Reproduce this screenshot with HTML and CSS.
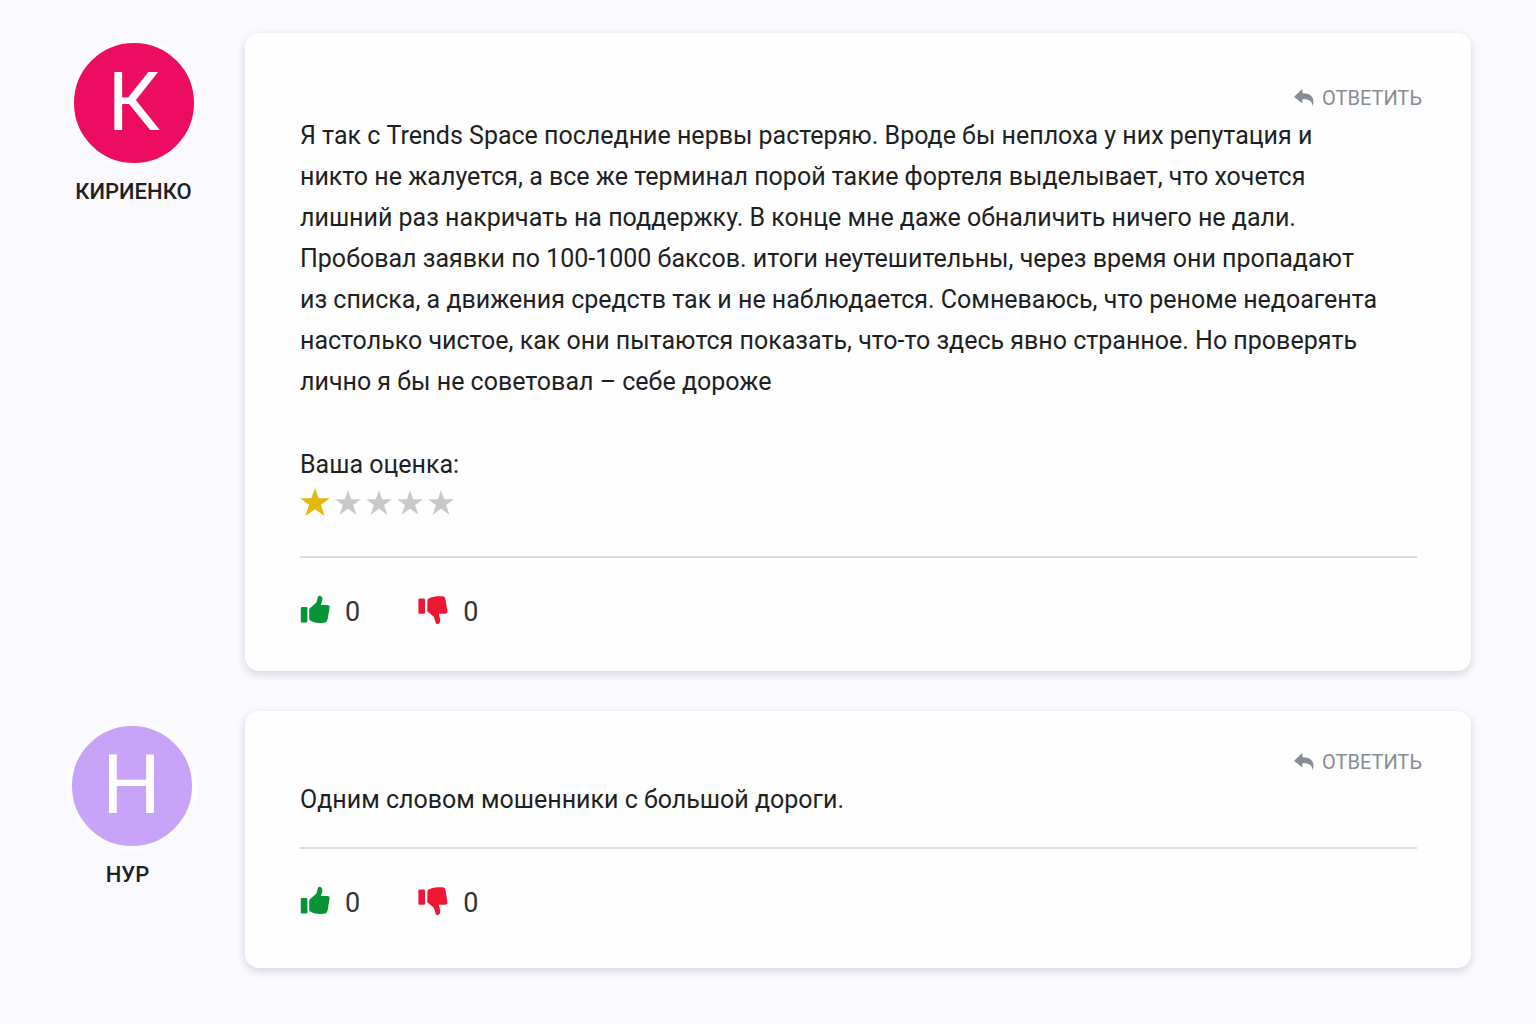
FILE: index.html
```html
<!DOCTYPE html>
<html lang="ru">
<head>
    <meta charset="UTF-8">
    <meta name="viewport" content="width=device-width, initial-scale=1.0">
    <title>Отзывы</title>
    <link rel="stylesheet" href="styles.css">
</head>
<body>
    <!-- Shared icons -->
    <svg class="icons" aria-hidden="true">
        <symbol id="reply" viewBox="0 0 20 18">
            <path d="M0.4 7.4 7.8 0.6Q8.4 0.2 8.4 1V4.2C16 4.3 19.6 7 19.4 13.2Q19.3 15.4 18.5 17.2C18.4 12 15 10.2 8.4 10.2V13.4Q8.4 14.4 7.6 13.8L0.4 8.2Q0 7.8 0.4 7.4Z"/>
        </symbol>
        <symbol id="star" viewBox="0 0 30 28">
            <path d="M15 0 18.6 10.3H30L20.9 16.8 24.6 28 15 21.2 5.4 28 9.1 16.8 0 10.3H11.4Z"/>
        </symbol>
        <symbol id="like" viewBox="0 0 30 30">
            <path d="M2 12H6.2Q7.4 12 7.4 13.2V26.2Q7.4 27.4 6.2 27.4H2Q0.8 27.4 0.8 26.2V13.2Q0.8 12 2 12Z"/>
            <path d="M9.6 13.6 16.4 7.4 18 1.8Q18.6 0.2 20.2 0.8C22.6 1.8 22.8 4 22 6.4L20.8 10H27.4Q30 10.2 29.6 12.8L27.6 24.4Q27.2 27 24.6 27.4C19.4 28.6 15 28 10.6 25.8Q9.2 25.2 9.2 23.8V14.8Q9.2 14 9.6 13.6Z"/>
        </symbol>
        <symbol id="dislike" viewBox="0 0 30 30">
            <path d="M1.4 3.4H6Q7 3.4 7 4.4V17.8Q7 18.8 6 18.8H1.4Q0.4 18.8 0.4 17.8V4.4Q0.4 3.4 1.4 3.4Z"/>
            <path d="M9.4 5.6C9.4 4 11 3.2 12.4 2.8 16.4 1.2 20.4 1 24.6 1.2Q27 1.4 27.4 3.8L29.4 16Q29.6 18.6 27 18.8H20.8L22 23.4C22.6 26 22 28 20 29Q18.4 29.6 17.8 28L15.8 21.8 9.8 16.8Q9.2 16.4 9.2 15.4Z"/>
        </symbol>
    </svg>

    <main class="comments">
        <article class="comment">
            <div class="author">
                <div class="avatar">К</div>
                <div class="name">КИРИЕНКО</div>
            </div>
            <div class="card card-rated">
                <button class="reply" type="button"><svg><use href="#reply"/></svg>ОТВЕТИТЬ</button>
                <p class="text">Я так с Trends Space последние нервы растеряю. Вроде бы неплоха у них репутация и никто не жалуется, а все же терминал порой такие фортеля выделывает, что хочется лишний раз накричать на поддержку. В конце мне даже обналичить ничего не дали. Пробовал заявки по 100-1000 баксов. итоги неутешительны, через время они пропадают из списка, а движения средств так и не наблюдается. Сомневаюсь, что реноме недоагента настолько чистое, как они пытаются показать, что-то здесь явно странное. Но проверять лично я бы не советовал – себе дороже</p>
                <div class="rating">
                    <div class="rating-label">Ваша оценка:</div>
                    <div class="stars" role="img" aria-label="1 из 5">
                        <svg class="active"><use href="#star"/></svg>
                        <svg><use href="#star"/></svg>
                        <svg><use href="#star"/></svg>
                        <svg><use href="#star"/></svg>
                        <svg><use href="#star"/></svg>
                    </div>
                </div>
                <div class="votes">
                    <button class="vote like" type="button" aria-label="Нравится"><svg><use href="#like"/></svg><span>0</span></button>
                    <button class="vote dislike" type="button" aria-label="Не нравится"><svg><use href="#dislike"/></svg><span>0</span></button>
                </div>
            </div>
        </article>

        <article class="comment">
            <div class="author author-short">
                <div class="avatar avatar-violet">Н</div>
                <div class="name">НУР</div>
            </div>
            <div class="card">
                <button class="reply" type="button"><svg><use href="#reply"/></svg>ОТВЕТИТЬ</button>
                <p class="text">Одним словом мошенники с большой дороги.</p>
                <div class="votes">
                    <button class="vote like" type="button" aria-label="Нравится"><svg><use href="#like"/></svg><span>0</span></button>
                    <button class="vote dislike" type="button" aria-label="Не нравится"><svg><use href="#dislike"/></svg><span>0</span></button>
                </div>
            </div>
        </article>
    </main>
</body>
</html>
```
FILE: styles.css
```css
* {
    box-sizing: border-box;
}
body {
    margin: 0;
    font-family: Roboto, "Liberation Sans", sans-serif;
    font-size: 25px;
    line-height: 41px;
    color: #1d1f23;
    background-color: #f9f9fe;
}
button {
    padding: 0;
    border: none;
    background: none;
    font: inherit;
    cursor: pointer;
}
svg {
    display: block;
    flex: none;
    fill: currentColor;
}
.icons {
    display: none;
}
.comments {
    display: flex;
    flex-direction: column;
    gap: 40px;
    padding: 33px 65px 55px 66px;
}
.comment {
    display: flex;
    align-items: flex-start;
    gap: 44px;
}
.author {
    display: flex;
    flex-direction: column;
    align-items: center;
    flex: none;
    width: 135px;
    padding-top: 5px;
}
.author-short {
    padding-top: 10px;
    padding-right: 4px;
}
.avatar {
    width: 130px;
    height: 130px;
    border: 5px solid #fcfcff;
    border-radius: 50%;
    background-color: #ec0d62;
    color: #fff;
    font-size: 82px;
    line-height: 118px;
    text-align: center;
}
.avatar-violet {
    background-color: #c9a3f8;
}
.name {
    margin-top: 10px;
    font-size: 22px;
    font-weight: 500;
    line-height: 28px;
}
.author-short .name {
    padding-right: 8px;
}
.card {
    display: flex;
    flex-direction: column;
    flex: 1;
    min-width: 0;
    padding: 37px 54px 44px 55px;
    border-radius: 14px;
    background-color: #fefefe;
    box-shadow: 0 3px 8px rgba(60, 85, 105, 0.2);
}
.card-rated {
    padding-top: 51px;
    padding-bottom: 38px;
}
.reply {
    display: flex;
    align-items: center;
    align-self: flex-end;
    gap: 8px;
    margin-right: -5px;
    color: #858c94;
    font-size: 20px;
    line-height: 28px;
}
.reply svg {
    width: 20px;
    height: 18px;
}
.text {
    margin: 3px 0 0;
    padding-right: 32px;
}
.rating {
    margin-top: 42px;
}
.stars {
    display: flex;
    align-items: center;
    gap: 5px;
    height: 34px;
    color: #c9c9c9;
}
.stars svg {
    width: 26px;
    height: 25px;
}
.stars .active {
    width: 30px;
    height: 28px;
    color: #e2b80c;
}
.votes {
    display: flex;
    gap: 58px;
    margin-top: 27px;
    padding-top: 34px;
    border-top: 2px solid #dcdcde;
}
.card-rated .votes {
    margin-top: 37px;
}
.vote {
    display: flex;
    align-items: flex-start;
    gap: 15px;
    color: #333;
    font-size: 27px;
}
.vote svg {
    width: 30px;
    height: 30px;
    margin-top: 3px;
}
.like svg {
    color: #079437;
}
.dislike svg {
    color: #eb1733;
}
```
